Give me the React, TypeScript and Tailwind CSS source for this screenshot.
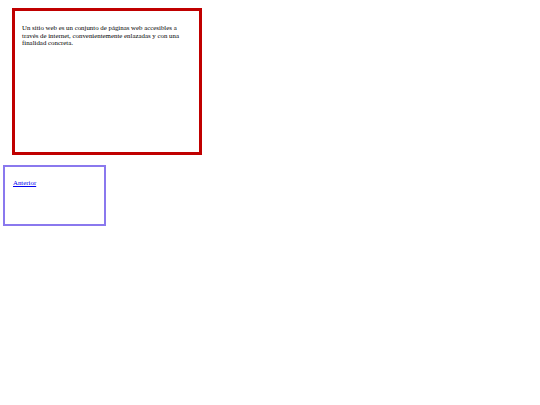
export default function App() {
  return (
    <div className="min-h-[405px] w-[540px] bg-white pt-[8px] font-['Liberation_Serif',serif] text-black">
      <div className="ml-[12px] h-[147px] w-[190px] border-[3px] border-[#c00000] px-[7px] pt-[13px]">
        <p className="text-[6.85px] leading-[7.6px]">
          Un sitio web es un conjunto de páginas web accesibles a través de internet, convenientemente enlazadas y con
          una finalidad concreta.
        </p>
      </div>
      <div className="ml-[3px] mt-[10px] h-[61px] w-[103px] border-2 border-[#8a78ee] pl-[8px] pt-[12px] text-[6.85px] leading-[7.6px]">
        <a href="#" className="text-[#0000ee] underline">
          Anterior
        </a>
      </div>
    </div>
  );
}
